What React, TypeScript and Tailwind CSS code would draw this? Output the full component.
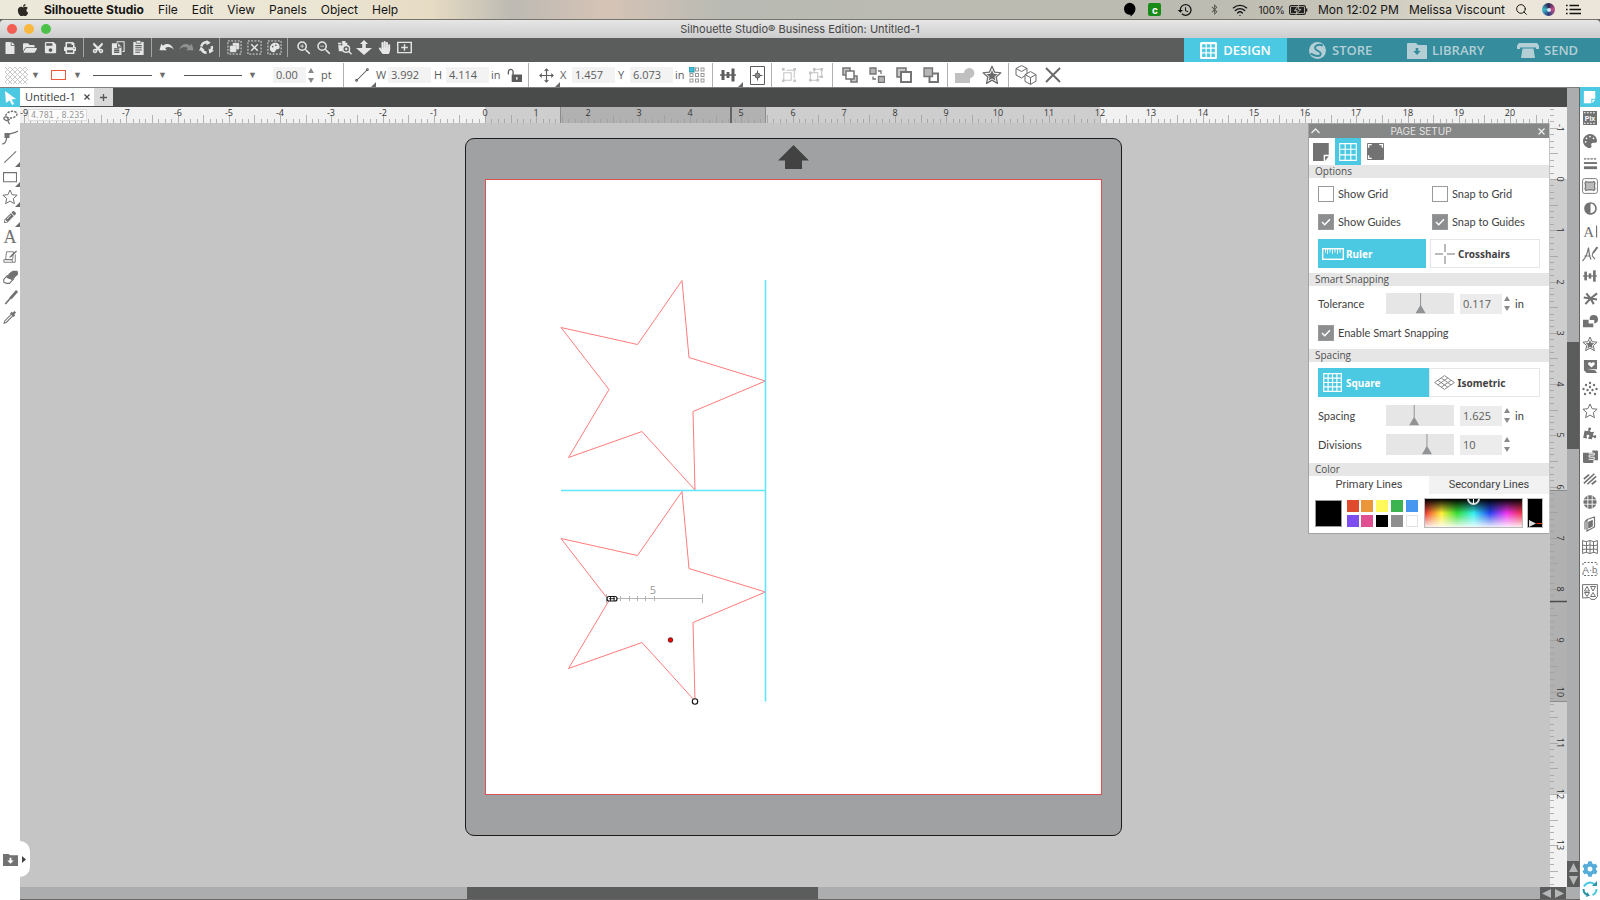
import React from "react";
import {
  FaApple, FaBluetoothB, FaFile, FaFolderOpen, FaPrint, FaCut, FaHandPaper, FaPalette, FaAdjust,
  FaPuzzlePiece, FaCog, FaPencilAlt,
} from "react-icons/fa";
import { MdZoomIn, MdZoomOut, MdHistory, MdSave } from "react-icons/md";
import { Wifi, Search } from "lucide-react";

type IconProps = { children: React.ReactNode; size?: number; w?: number; sw?: number };

/* Line icon drawn on a 16-unit grid. */
function Ic({ children, size = 16, w = 16, sw = 1.2 }: IconProps) {
  return (
    <svg width={(size * w) / 16} height={size} viewBox={`0 0 ${w} 16`} fill="none" stroke="currentColor" strokeWidth={sw} aria-hidden="true">
      {children}
    </svg>
  );
}

const STAR = "M8 1l2.1 4.7 5 .5-3.8 3.4 1.1 5.1L8 12.1l-4.4 2.6 1.1-5.1L.9 6.2l5-.5z";

function StarInStar() {
  return (
    <>
      <path d={STAR} strokeWidth="1" strokeLinejoin="round" />
      <path d="M8 4l1.3 2.9 3.1.3-2.4 2.1.7 3.1L8 10.8l-2.7 1.6.7-3.1-2.4-2.1 3.1-.3z" fill="currentColor" stroke="none" />
    </>
  );
}

function AlignBars() {
  return (
    <g fill="currentColor" stroke="none">
      <rect x="0" y="7.3" width="16" height="1.4" />
      <rect x="1.5" y="3" width="3" height="10" />
      <rect x="6.6" y="5" width="2.8" height="6" />
      <rect x="11.5" y="1.5" width="3" height="13" />
    </g>
  );
}

function FolderDown() {
  return (
    <>
      <path d="M0 2h6l1.5 1.5H16V15H0z" fill="currentColor" stroke="none" />
      <path d="M7 6h2v3h2.4L8 12.4 4.6 9H7z" className="fill-white" stroke="none" />
    </>
  );
}

function Btn({ label, className = "", children }: { label: string; className?: string; children: React.ReactNode }) {
  return (
    <button type="button" aria-label={label} className={`flex items-center justify-center ${className}`}>
      {children}
    </button>
  );
}

function MenuBar() {
  return (
    <header className="flex h-[19px] shrink-0 items-center bg-[linear-gradient(90deg,#ece8da_0%,#ebe5d3_20%,#e6dbc3_27%,#bdbab3_32%,#d6c3b6_38%,#b9bab3_45%,#bcbbb1_75%,#c9c6ba_85%,#ebe6d9_95%)] font-['Inter',sans-serif] text-[12px] leading-4 text-[#141414]">
      <nav className="flex items-center gap-[14px] pl-4">
        <a href="#apple" aria-label="Apple"><FaApple size={14} className="text-[#2d2a24]" /></a>
        <a href="#app" className="font-bold">Silhouette Studio</a>
        <a href="#file">File</a>
        <a href="#edit">Edit</a>
        <a href="#view">View</a>
        <a href="#panels">Panels</a>
        <a href="#object">Object</a>
        <a href="#help">Help</a>
      </nav>
      <div className="ml-auto flex items-center pr-[19px]">
        <svg width="13" height="15" viewBox="0 0 13 15" className="mr-3" aria-hidden="true"><path d="M6.500.800a6 6 0 0 1 6 6c0 3.500-2.500 6-5 7.700v-1.700a6 6 0 1 1-1-12z" fill="#000" /></svg>
        <span className="mr-4 flex size-[13px] items-center justify-center rounded-[2px] bg-[#178a17] text-[10px] font-bold text-white">c</span>
        <MdHistory size={16} className="mr-4" />
        <FaBluetoothB size={11} className="mr-3 text-[#55544d]" />
        <Wifi size={16} strokeWidth={2} className="mr-[10px]" />
        <span className="mr-1 text-[10px]">100%</span>
        <svg width="19" height="10" viewBox="0 0 19 10" className="mr-[10px]" aria-hidden="true">
          <rect x=".6" y=".6" width="15.8" height="8.8" rx="1.5" fill="none" stroke="#222" strokeWidth="1.1" />
          <rect x="2" y="2" width="13" height="6" fill="#222" />
          <path d="M9.5 .5L5.5 5.6h2.6L7 9.5l5-5.2H9.2z" fill="#222" stroke="#ddd9cc" strokeWidth=".8" />
          <path d="M17.6 3.4v3.2" stroke="#222" strokeWidth="1.4" />
        </svg>
        <span className="mr-[10px]">Mon 12:02 PM</span>
        <span className="mr-[10px]">Melissa Viscount</span>
        <Search size={13} strokeWidth={1.8} className="mr-[14px]" />
        <span className="mr-[11px] flex size-[13px] items-center justify-center rounded-full bg-[conic-gradient(#2b2450,#c24d8a,#2b3f7d,#3fb7c9,#2b2450)]">
          <span className="size-1 rounded-full bg-[#cfe6f5]" />
        </span>
        <svg width="15" height="11" viewBox="0 0 15 11" stroke="#111" strokeWidth="1.5" aria-hidden="true">
          <path d="M0 1.5h1.6M0 5.5h1.6M0 9.5h1.6M3.5 1.5H13M3.5 5.5H15M3.5 9.5H15" />
        </svg>
      </div>
    </header>
  );
}

function TitleBar() {
  return (
    <div className="relative flex h-[19px] shrink-0 items-center justify-center rounded-t-[4px] border-t border-[#77746c] bg-linear-to-b from-[#e6e6e6] to-[#cdcdcd]">
      <div className="absolute left-[7px] flex gap-[7px]">
        <button type="button" aria-label="Close window" className="size-[10px] rounded-full bg-[#f25e54]" />
        <button type="button" aria-label="Minimize window" className="size-[10px] rounded-full bg-[#f8b83e]" />
        <button type="button" aria-label="Zoom window" className="size-[10px] rounded-full bg-[#4cc149]" />
      </div>
      <h1 className="font-['Inter',sans-serif] text-[11px] leading-4 text-[#464646]">Silhouette Studio® Business Edition: Untitled-1</h1>
    </div>
  );
}

function ToolbarGroup({ children, last = false }: { children: React.ReactNode; last?: boolean }) {
  return <div className={`flex h-[19px] first:pl-0 ${last ? "pl-[6px]" : "border-r border-[#a4a5a5] pr-[3px] pl-1"}`}>{children}</div>;
}

const DASH = <rect x="1" y="1" width="14" height="14" strokeDasharray="2 1.5" />;

function MainToolbar() {
  return (
    <div className="flex h-6 shrink-0 bg-[#5b5d5c] text-[#e6e6e6]">
      <ToolbarGroup>
        <Btn label="New" className="w-5"><FaFile size={12} /></Btn>
        <Btn label="Open" className="w-5"><FaFolderOpen size={14} /></Btn>
        <Btn label="Save" className="w-5"><MdSave size={15} /></Btn>
        <Btn label="Print" className="w-5"><FaPrint size={12} /></Btn>
      </ToolbarGroup>
      <ToolbarGroup>
        <Btn label="Cut" className="w-5"><FaCut size={12} className="-rotate-90" /></Btn>
        <Btn label="Copy" className="w-5">
          <Ic size={14}><path d="M7 2V.8h8V12h-2" /><path d="M1 2.5h7l4 4V16H1z" fill="currentColor" stroke="none" /><path d="M7.5 3v4H12M3.5 9h6M3.5 11h6M3.5 13h6" stroke="#5b5d5c" /></Ic>
        </Btn>
        <Btn label="Paste" className="w-5">
          <Ic size={15}><path d="M2.5 2h11v14h-11z" fill="currentColor" stroke="none" /><path d="M5.5 .5h5v3h-5z" fill="currentColor" stroke="#5b5d5c" strokeWidth=".8" /><path d="M4.5 6h7M4.5 8.3h7M4.5 10.6h7M4.5 13h5" stroke="#5b5d5c" /></Ic>
        </Btn>
      </ToolbarGroup>
      <ToolbarGroup>
        <Btn label="Undo" className="w-5">
          <Ic size={15}><path d="M.5 11L2.4 4l1.8 2C8 2.600 14 4 15.800 10.500 13 7 9.500 7 6.500 8.600l1.800 2.400z" fill="currentColor" stroke="none" /></Ic>
        </Btn>
        <Btn label="Redo" className="w-5 text-[#8f9190]">
          <Ic size={15}><path d="M15.500 11L13.600 4l-1.800 2C8 2.600 2 4 .2 10.500 3 7 6.500 7 9.500 8.600L7.700 11z" fill="currentColor" stroke="none" /></Ic>
        </Btn>
        <Btn label="Sync" className="w-5">
          <Ic size={15} sw={2.6}><path d="M2.500 7a5.600 5.600 0 0 1 6-4.600M13.500 6.500a5.600 5.600 0 0 1-2 6M8 13.600a5.600 5.600 0 0 1-5-3" /><path d="M8 0l4.500 3L8 5.500zM16 11.500l-5 3-.8-5.200zM0 11.500l2-4.500 4 3.600z" fill="currentColor" stroke="none" /></Ic>
        </Btn>
      </ToolbarGroup>
      <ToolbarGroup>
        <Btn label="Select all" className="w-5"><Ic size={15} sw={1}>{DASH}<path d="M3.500 6.500h6v6h-6z" fill="currentColor" /><path d="M6.500 3.500h6v6h-2v-4h-4z" fill="currentColor" /></Ic></Btn>
        <Btn label="Deselect" className="w-5"><Ic size={15} sw={1}>{DASH}<path d="M4.500 4.500l7 7M11.500 4.500l-7 7" strokeWidth="1.600" /></Ic></Btn>
        <Btn label="Select by color" className="w-5"><Ic size={15} sw={1}>{DASH}<path d="M3 9c0-4 3-6 6-6 3 0 4.500 2 4.500 4.500S12 10 10 10c-1 0-.5 3-3 3S3 11 3 9z" fill="currentColor" stroke="none" /><circle cx="6" cy="7" r=".9" fill="#5b5d5c" stroke="none" /><circle cx="9.500" cy="5.600" r=".9" fill="#5b5d5c" stroke="none" /></Ic></Btn>
      </ToolbarGroup>
      <ToolbarGroup last>
        <Btn label="Zoom in" className="w-5"><MdZoomIn size={18} /></Btn>
        <Btn label="Zoom out" className="w-5"><MdZoomOut size={18} /></Btn>
        <Btn label="Zoom selection" className="w-5"><Ic size={15}><path d="M1 3h4V1h4v2h2v4H7v5H2z" fill="currentColor" stroke="none" /><path d="M5 1v5M1 5h5" stroke="#5b5d5c" strokeWidth=".8" /><circle cx="9.800" cy="9.500" r="3.600" fill="#5b5d5c" strokeWidth="1.500" /><path d="M8.500 9.500h2.600M9.800 8.200v2.600M12.500 12l3 3.200" strokeWidth="1.500" /></Ic></Btn>
        <Btn label="Drag zoom" className="w-5"><Ic size={16}><path d="M8 0l4 4H9.800v4H16l-8 7-8-7h6.200V4H4z" fill="currentColor" stroke="none" /></Ic></Btn>
        <Btn label="Pan" className="w-5"><FaHandPaper size={13} /></Btn>
        <Btn label="Fit to page" className="w-5"><Ic size={15}><path d="M.8 2.500h14.400v11H.8zM4.500 8h7M8 4.500v7" strokeWidth="1.500" /></Ic></Btn>
      </ToolbarGroup>
      <nav className="ml-auto flex font-['Open_Sans',sans-serif] text-[13px] leading-5 font-semibold">
        <a href="#design" className="flex h-full w-[103px] items-center justify-center gap-[6px] bg-[#4bc8e2] text-white">
          <Ic size={17}><rect width="16" height="16" rx="1.500" fill="currentColor" stroke="none" /><path d="M2 2h3.200v3.200H2zM6.400 2h3.200v3.200H6.400zM10.800 2H14v3.200h-3.200zM2 6.400h3.200v3.200H2zM6.400 6.400h3.200v3.200H6.400zM10.800 6.400H14v3.200h-3.200zM2 10.800h3.200V14H2zM6.400 10.800h3.200V14H6.400zM10.800 10.800H14V14h-3.200z" fill="#4bc8e2" stroke="none" /></Ic>
          DESIGN
        </a>
        <div className="flex w-[313px] bg-[#348c9d] pl-[22px] text-[#b3cfd5]">
          <a href="#store" className="flex w-[98px] items-center gap-[6px]">
            <Ic size={17}><circle cx="8" cy="8" r="8" fill="currentColor" stroke="none" /><path d="M13 3.500C9 1.500 4.500 3.500 6 6.500c1.200 2.300 5.500 2 5 5C10.500 14 6 13.500 1.500 11" stroke="#348c9d" strokeWidth="1.800" /></Ic>
            STORE
          </a>
          <a href="#library" className="flex w-[110px] items-center gap-[5px]">
            <svg width="20" height="17" viewBox="0 0 20 17" aria-hidden="true"><path d="M1 1h8l2 2h8a1 1 0 0 1 1 1v13H0V2a1 1 0 0 1 1-1z" fill="#b3cfd5" /><path d="M8.700 6h2.600v3h2.400L10 13 6.300 9h2.400z" fill="#348c9d" /></svg>
            LIBRARY
          </a>
          <a href="#send" className="flex items-center gap-[5px]">
            <svg width="22" height="15" viewBox="0 0 22 15" aria-hidden="true"><path d="M2 0h18l2 2.500V6h-3V4.500H3V6H0V2.500z" fill="#b3cfd5" /><path d="M5.500 5.500h11L18 15H4z" fill="#b3cfd5" /></svg>
            SEND
          </a>
        </div>
      </nav>
    </div>
  );
}

function Caret() {
  return <span className="text-[9px] leading-3 text-[#6d6d6d]">▼</span>;
}

function Spinner({ label }: { label: string }) {
  return (
    <span className="flex w-[10px] flex-col items-center gap-[5px]">
      <button type="button" aria-label={`Increase ${label}`}><svg width="6" height="5" viewBox="0 0 6 5"><path d="M3 0l3 5H0z" fill="#8a8a8a" /></svg></button>
      <button type="button" aria-label={`Decrease ${label}`}><svg width="6" height="5" viewBox="0 0 6 5"><path d="M3 5l3-5H0z" fill="#8a8a8a" /></svg></button>
    </span>
  );
}

function NumField({ id, label, value }: { id: string; label: string; value: string }) {
  return (
    <div className="flex items-center">
      <label htmlFor={id} className="w-3">{label}</label>
      <input id={id} defaultValue={value} className="h-4 w-[43px] bg-[#f3f3f3] px-[3px] text-[11px] text-[#5c5c5c]" />
    </div>
  );
}

function Sep() {
  return <div className="h-full w-px shrink-0 bg-[#b0b0b0]" />;
}

function Corner() {
  return <svg width="5" height="5" viewBox="0 0 5 5" className="absolute right-0 bottom-0" aria-hidden="true"><path d="M5 0v5H0z" fill="#6b6b6b" /></svg>;
}

function OptionsBar() {
  return (
    <div className="flex h-[26px] shrink-0 items-center border-b border-[#7d7d7d] bg-white pt-px font-['Open_Sans','Noto_Sans',sans-serif] text-[11px] leading-4 text-[#5c5c5c]">
      <button type="button" aria-label="Fill color" className="flex w-[46px] items-center gap-[3px] pl-[5px]">
        <svg width="23" height="17" aria-hidden="true">
          <defs>
            <pattern id="hatch" width="5" height="5" patternUnits="userSpaceOnUse"><path d="M0 0l5 5M5 0L0 5" stroke="#bdbdbd" strokeWidth=".8" /></pattern>
          </defs>
          <rect width="23" height="17" fill="url(#hatch)" />
        </svg>
        <Caret />
      </button>
      <button type="button" aria-label="Line color" className="flex w-[47px] items-center gap-[7px] pl-[5px]">
        <span className="h-[10px] w-[15px] border border-[#ef5a3c]" />
        <Caret />
      </button>
      <button type="button" aria-label="Line style" className="flex w-[91px] items-center gap-[6px]">
        <span className="h-px w-[59px] bg-[#555]" />
        <Caret />
      </button>
      <button type="button" aria-label="Line ends" className="flex w-[89px] items-center gap-[6px]">
        <span className="h-px w-[58px] bg-[#555]" />
        <Caret />
      </button>
      <input aria-label="Line thickness" defaultValue="0.00" className="h-4 w-[33px] bg-[#f3f3f3] px-[3px] text-[11px]" />
      <Spinner label="line thickness" />
      <span className="ml-[5px] w-[22px]">pt</span>
      <Sep />
      <div className="relative flex h-full w-[32px] items-center justify-center pl-1"><Ic size={14}><path d="M2 14L14 2" /><circle cx="1.800" cy="14.200" r="1" /><circle cx="14.200" cy="1.800" r="1" /></Ic><Corner /></div>
      <div className="flex gap-[3px]">
        <NumField id="w" label="W" value="3.992" />
        <NumField id="h" label="H" value="4.114" />
      </div>
      <span className="w-4 pl-[2px]">in</span>
      <Btn label="Lock aspect ratio" className="w-[18px]"><Ic size={15}><path d="M1.500 7V4a2.500 2.500 0 0 1 5 0v3.500" strokeWidth="1.400" /><path d="M5 7h11v8H5zM9.800 9.500v3h1.400v-3z" fill="currentColor" fillRule="evenodd" stroke="none" /></Ic></Btn>
      <div className="w-[5px]" />
      <Sep />
      <div className="relative flex h-full w-[31px] items-center justify-center pl-1"><Ic size={15}><path d="M1 8h14M8 1v14M3 6L1 8l2 2M13 6l2 2-2 2M6 3l2-2 2 2M6 13l2 2 2-2" /></Ic><Corner /></div>
      <div className="flex gap-[3px]">
        <NumField id="x" label="X" value="1.457" />
        <NumField id="y" label="Y" value="6.073" />
      </div>
      <span className="w-[14px] pl-[2px]">in</span>
      <Btn label="Anchor point" className="w-[20px]">
        <Ic size={16} sw={1}>
          {[1, 6.500, 12].map((y) => [1, 6.500, 12].map((x) => <rect key={`${x}-${y}`} x={x} y={y} width="3" height="3" stroke="#9a9a9a" />))}
          <rect x="0" y="0" width="5" height="5" fill="#3fc0da" stroke="#2a93a8" />
        </Ic>
      </Btn>
      <div className="w-[5px]" />
      <Sep />
      <div className="relative flex h-full w-[30px] items-center justify-center"><Ic size={16}><AlignBars /></Ic><Corner /></div>
      <Btn label="Center to page" className="w-[28px]"><svg width="15" height="19" viewBox="0 0 15 19" fill="none" stroke="currentColor" aria-hidden="true"><path d="M.5.500h14v18H.5zM2.500 9.500h10M7.500 4.500v10" /><circle cx="7.500" cy="9.500" r="2.500" fill="#8a8a8a" /></svg></Btn>
      <Sep />
      <div className="flex w-[60px] justify-center text-[#c4c4c4]">
        <Btn label="Group" className="w-[27px]"><Ic size={14}><path d="M2 5.500h8.500V14H2zM5 2.500h9v9" /><path d="M0 0h3v3H0zM13 0h3v3h-3zM0 13h3v3H0zM13 13h3v3h-3z" fill="currentColor" stroke="none" /></Ic></Btn>
        <Btn label="Ungroup" className="w-[27px]"><Ic size={14}><path d="M1.500 5.500H10V14H1.500zM6 5.500v-4h8.500V10H10" /><path d="M4.500 0h3v3h-3zM13 0h3v3h-3zM0 4h3v3H0zM0 12.500h3v3H0zM8.500 12.500h3v3h-3zM13 8.500h3v3h-3z" fill="currentColor" stroke="none" /></Ic></Btn>
      </div>
      <Sep />
      <div className="flex w-[114px] justify-center text-[#747474]">
        <Btn label="Bring to front" className="w-[27px]"><Ic size={16} sw={1.500}><path d="M1 1h7v7H1zM9 9h6v6H9z" fill="#c9c9c9" /><path d="M4 4h8v8H4z" className="fill-white" /></Ic></Btn>
        <Btn label="Bring forward" className="w-[27px]"><Ic size={16} sw={1.300}><path d="M1 1h6v6H1zM9.500 9.500h6v6h-6z" fill="#b5b5b5" /><path d="M9 4h3v3M4 9.500V12h3" /></Ic></Btn>
        <Btn label="Send backward" className="w-[27px]"><Ic size={16} sw={1.500}><path d="M1 1h9v9H1z" fill="#c9c9c9" /><path d="M5 5h10v10H5z" className="fill-white" strokeWidth="2" /></Ic></Btn>
        <Btn label="Send to back" className="w-[27px]"><Ic size={16} sw={2}><path d="M6.500 6.500H15V15H6.500z" /><path d="M1 1h8.500v8.500H1z" fill="#b5b5b5" strokeWidth="1.300" /></Ic></Btn>
      </div>
      <Sep />
      <div className="flex w-[60px] justify-center text-[#6a6a6a]">
        <Btn label="Weld" className="w-[27px] text-[#c0c0c0]"><svg width="20" height="16" viewBox="0 0 20 16" aria-hidden="true"><path d="M0 6h9a5.200 5.200 0 1 1 6 5.300V16H0z" fill="currentColor" /></svg></Btn>
        <Btn label="Offset" className="w-[27px]"><Ic size={20}><StarInStar /></Ic></Btn>
      </div>
      <Sep />
      <div className="flex w-[60px] items-center justify-center text-[#6a6a6a]">
        <Btn label="3D view" className="w-[27px]"><svg width="22" height="20" viewBox="0 0 22 20" fill="none" stroke="currentColor" aria-hidden="true"><path d="M6.500.600l5.500 2.700v6L6.500 13 1 10V3.500zM1 3.500l5.500 3L12 3.300" /><path d="M15.500 6.600l5.500 3v6.500l-5.500 3.300-5.500-3V9.600zM10 9.600l5.500 3 5.500-3M15.500 12.600v6.800" className="fill-white" /></svg></Btn>
        <Btn label="Delete" className="w-[27px]"><Ic size={16} sw={1.900}><path d="M1 1l14 14M15 1L1 15" /></Ic></Btn>
      </div>
    </div>
  );
}

function LeftTools() {
  const tools: { label: string; corner?: boolean; icon: React.ReactNode }[] = [
    { label: "Lasso", icon: <Ic size={15}><ellipse cx="9" cy="5" rx="6" ry="3.500" strokeDasharray="2.500 1.200" transform="rotate(-12 9 5)" strokeWidth="1.600" /><path d="M4 7.500C1 7 0 9 2 10.500s5 .5 5-1M5 8c1 3-1 3 2 7" strokeWidth="1.400" /></Ic> },
    { label: "Edit points", icon: <Ic size={16}><path d="M0 15c5 0 4-5 5-8s6-2 11-5" /><path d="M2.500 4h5v5h-5z" fill="currentColor" stroke="none" /></Ic> },
    { label: "Line", corner: true, icon: <Ic size={14}><path d="M1.500 14.500L15 1.500" /></Ic> },
    { label: "Rectangle", corner: true, icon: <Ic size={14}><path d="M.6 3h14.800v10.500H.6z" /></Ic> },
    { label: "Polygon", corner: true, icon: <Ic size={16} sw={1}><path d={STAR} /></Ic> },
    { label: "Freehand", corner: true, icon: <FaPencilAlt size={12} /> },
    { label: "Text", icon: <span className="font-['Liberation_Serif',serif] text-[18px] leading-5">A</span> },
    { label: "Sketch", icon: <Ic size={14} sw={1}><path d="M4 2h8l-1 9H3zM1 11h9l1 3h3V5M1 11v3h10" /><path d="M15 .5L8 7l-.8 2.200L9.500 8 16 1.800z" fill="currentColor" stroke="none" /></Ic> },
    { label: "Eraser", icon: <Ic size={15}><path d="M7 4l3.500-2.500H15l.5 3L9.500 10 4.500 8z" fill="currentColor" /><path d="M5 5.500L.8 10v3l3 1.200h3L12 9" /></Ic> },
    { label: "Knife", icon: <Ic size={15}><path d="M15 1L8 9" strokeWidth="3" /><path d="M8.500 8L2.500 15" strokeWidth="1.800" /></Ic> },
    { label: "Eyedropper", icon: <Ic size={14}><path d="M10 4.500L2 12.500 1.200 15l2.500-.8 8-8" /><path d="M9 3l4 4M10.500 5.500L14 2" strokeWidth="2.800" /></Ic> },
  ];
  return (
    <aside className="flex w-5 shrink-0 flex-col bg-white text-[#727272]">
      <Btn label="Select" className="h-[19px] w-5 bg-[#4bc8e2] text-white">
        <svg width="11" height="14" viewBox="0 0 11 14" fill="currentColor" aria-hidden="true"><path d="M0 0l11 8-4.500.4 2.600 4.600-2 1-2.500-4.700L1 12z" /></svg>
      </Btn>
      {tools.map((t) => (
        <div key={t.label} className="relative h-5">
          <Btn label={t.label} className="size-5">{t.icon}</Btn>
          {t.corner && <Corner />}
        </div>
      ))}
      <div className="relative mt-auto mb-[23px] h-9">
        <div className="absolute top-0 left-5 z-10 flex h-9 w-[10px] items-center rounded-r-full bg-white pl-[2px]">
          <svg width="4" height="7" viewBox="0 0 4 7" aria-hidden="true"><path d="M0 0l4 3.500L0 7z" fill="#444" /></svg>
        </div>
        <Btn label="Show library" className="h-9 w-5"><Ic size={15}><FolderDown /></Ic></Btn>
      </div>
    </aside>
  );
}

const INCH = 51.25;

function HorizontalRuler() {
  const origin = 465;
  const ticks: string[] = [];
  for (let i = -9 * 8; i <= 21 * 8; i++) {
    const x = Math.round(origin + (i * INCH) / 8) + 0.5;
    ticks.push(`M${x} 16v-${i % 4 === 0 ? 8 : 4}`);
  }
  const labels = Array.from({ length: 30 }, (_, i) => i - 9).filter((n) => n !== -8);
  return (
    <svg className="block h-4 w-full bg-[#f1f1f1] font-['Open_Sans',sans-serif]" aria-label="Horizontal ruler">
      <rect x={origin} width={12 * INCH} height="16" fill="#cecece" />
      <rect x="540" width="205" height="16" fill="#b1b1b1" />
      <path d={ticks.join("")} stroke="#9d9d9d" strokeWidth="1" opacity=".75" />
      <path d="M540.500 0v16M745.500 0v16" stroke="#8c8c8c" />
      <path d="M711 0v16" stroke="#4c4c4c" strokeWidth="1.500" />
      {labels.map((n) => (
        <text key={n} x={Math.round(origin + n * INCH)} y="9" fontSize="9" textAnchor="middle" fill="#333">{n}</text>
      ))}
    </svg>
  );
}

function VerticalRuler() {
  const origin = 72;
  const ticks: string[] = [];
  for (let i = -11; i <= 110; i++) {
    const y = Math.round(origin + (i * INCH) / 8) + 0.5;
    ticks.push(`M0 ${y}h${i % 4 === 0 ? 8 : 4}`);
  }
  const labels = Array.from({ length: 15 }, (_, i) => i - 1);
  return (
    <svg className="block h-full w-[17px] shrink-0 bg-[#f1f1f1] font-['Open_Sans',sans-serif]" aria-label="Vertical ruler">
      <rect y={origin} width="17" height={12 * INCH} fill="#cecece" />
      <rect y="383" width="17" height="212" fill="#b1b1b1" />
      <path d={ticks.join("")} stroke="#9d9d9d" opacity=".75" />
      <path d="M0 383.500h17M0 594.500h17" stroke="#8c8c8c" />
      <path d="M0 494.500h17" stroke="#4c4c4c" strokeWidth="1.500" />
      {labels.map((n) => {
        const y = Math.round(origin + n * INCH);
        return <text key={n} x="7" y={y} fontSize="9" textAnchor="middle" fill="#333" transform={`rotate(90 7 ${y})`}>{n}</text>;
      })}
    </svg>
  );
}

const STAR_POINTS = "196,100.5 203,177.500 279.500,201 207,231.500 209,310 156,251.500 82.500,277.500 123,209.500 75,147.500 151.500,164.500";

function Mat() {
  return (
    <div className="absolute top-[15px] left-[445px] h-[698px] w-[657px] rounded-[9px] border border-[#1c1c1c] bg-[#9fa1a3]">
      <svg width="31" height="24" viewBox="0 0 31 24" className="absolute top-[6px] left-[312px]" aria-hidden="true"><path d="M15.500 0L31 15.500h-7V24H7v-8.500H0z" fill="#424242" /></svg>
      <div className="absolute top-[40px] left-[19px] h-[616px] w-[617px] border border-[#dc5054] bg-white">
        <svg width="615" height="614" fill="none" className="block" aria-label="Two stars with guides">
          <polygon points={STAR_POINTS} stroke="#ff7b7b" />
          <polygon points={STAR_POINTS} stroke="#ff7b7b" transform="translate(0 211)" />
          <path d="M279.500 100v421.500" stroke="#5fe6fb" strokeWidth="1.600" />
          <path d="M75 310.500h205" stroke="#5fe6fb" strokeWidth="1.600" />
          <g transform="translate(-1 1)">
            <path d="M122 417.500h95.500M121.500 413v9M217.500 413v9M135.500 415v5M144.500 415v5M152.500 415v5M160.500 415v5M169.500 415v5" stroke="#b5b5b5" />
            <text x="168" y="413" fontSize="11" textAnchor="middle" fill="#999" className="font-['Open_Sans',sans-serif]">5</text>
            <rect x="122" y="415.500" width="10" height="4.500" rx="2" fill="#fff" stroke="#111" strokeWidth="1.200" />
            <path d="M124 417.700h6M125.500 416v4M129 416v4" stroke="#111" strokeWidth=".9" />
          </g>
          <circle cx="184.500" cy="460" r="2.300" fill="#f00" stroke="#401010" strokeWidth=".8" />
          <circle cx="209" cy="521.500" r="2.700" fill="#fff" stroke="#111" strokeWidth="1.100" />
        </svg>
      </div>
    </div>
  );
}

function SectionTitle({ children }: { children: React.ReactNode }) {
  return <h3 className="h-[13px] bg-[#e6e6e6] pl-[6px] font-['Open_Sans',sans-serif] text-[10px] leading-[13px] text-[#4f4f4f]">{children}</h3>;
}

function Check({ id, label, checked = false }: { id: string; label: string; checked?: boolean }) {
  return (
    <div className="flex items-center gap-1">
      <span className="relative flex size-4">
        <input id={id} type="checkbox" defaultChecked={checked} className="peer size-4 appearance-none border border-[#9a9a9a] bg-white checked:bg-[#8c8e90]" />
        <svg width="10" height="8" viewBox="0 0 10 8" fill="none" className="pointer-events-none absolute top-1 left-[3px] hidden peer-checked:block" aria-hidden="true"><path d="M1 4l2.700 2.700L9 1.200" stroke="#fff" strokeWidth="1.500" /></svg>
      </span>
      <label htmlFor={id}>{label}</label>
    </div>
  );
}

function SliderRow({ id, label, pos, value, unit }: { id: string; label: string; pos: number; value: string; unit?: string }) {
  return (
    <div className="flex h-[21px] items-center pl-[9px]">
      <label htmlFor={id} className="w-[68px]">{label}</label>
      <input
        aria-label={`${label} slider`}
        type="range"
        defaultValue={pos}
        className="h-[21px] w-[68px] appearance-none bg-[#e6e6e6] [&::-webkit-slider-thumb]:h-[21px] [&::-webkit-slider-thumb]:w-[10px] [&::-webkit-slider-thumb]:appearance-none [&::-webkit-slider-thumb]:bg-[#919395] [&::-webkit-slider-thumb]:[clip-path:polygon(45%_0,55%_0,55%_60%,100%_97%,0_97%,45%_60%)]"
      />
      <input id={id} defaultValue={value} className="ml-[6px] h-5 w-[42px] bg-[#ececec] pl-[3px] font-['Open_Sans',sans-serif] text-[11px] text-[#5c5c5c]" />
      <Spinner label={label} />
      {unit && <span className="pl-[3px]">{unit}</span>}
    </div>
  );
}

function PageSetup() {
  return (
    <section className="absolute top-0 right-px w-[241px] border border-[#a3a3a3] border-r-0 bg-white pb-[5px] font-['Lato',sans-serif] text-[11px] leading-4 text-[#424242]">
      <div className="flex h-[14px] items-center bg-[#868787] pr-1 pl-[2px] text-white">
        <Btn label="Collapse panel"><svg width="9" height="6" viewBox="0 0 9 6" fill="none" stroke="#eee" strokeWidth="1.300"><path d="M.5 5l4-4 4 4" /></svg></Btn>
        <h2 className="flex-1 pr-4 text-center font-['Inter',sans-serif] text-[10px] leading-[13px] text-[#e4e4e4]">PAGE SETUP</h2>
        <Btn label="Close panel"><svg width="7" height="7" viewBox="0 0 7 7" stroke="#eee" strokeWidth="1.200"><path d="M.5.500l6 6M6.500.500l-6 6" /></svg></Btn>
      </div>
      <div className="flex h-[27px] items-center text-[#727272]">
        <Btn label="Page" className="w-[26px]"><Ic size={18}><path d="M0 0h14v10.500H9.500V16H0z" fill="currentColor" stroke="none" /><path d="M10.700 16v-4.200H14z" fill="currentColor" stroke="none" /></Ic></Btn>
        <Btn label="Grid" className="h-full w-[26px] bg-[#4bc8e2] text-white"><Ic size={18} sw={1}><path d="M.6.600h14.800v14.800H.6zM5.500.600v14.800M10.500.600v14.800M.6 5.500h14.800M.6 10.500h14.800" /></Ic></Btn>
        <Btn label="Registration marks" className="w-[28px]"><Ic size={17}><rect width="16" height="16" rx="1" fill="currentColor" stroke="none" /><path d="M1.500 4.500v-3h3M11.500 1.500h3v3M1.500 11.500v3h3" stroke="#fff" strokeWidth="1.300" /></Ic></Btn>
      </div>
      <SectionTitle>Options</SectionTitle>
      <div className="grid grid-cols-[114px_1fr] gap-y-3 px-[9px] pt-2 pb-[9px]">
        <Check id="show-grid" label="Show Grid" />
        <Check id="snap-grid" label="Snap to Grid" />
        <Check id="show-guides" label="Show Guides" checked />
        <Check id="snap-guides" label="Snap to Guides" checked />
      </div>
      <div className="flex gap-1 px-[9px] pb-[5px] font-['Noto_Sans',sans-serif] text-[10px] font-bold">
        <button type="button" className="flex h-[29px] flex-1 items-center gap-[2px] bg-[#4bc8e2] pl-1 text-white">
          <svg width="22" height="12" viewBox="0 0 22 12" fill="none" stroke="#fff" aria-hidden="true"><rect x=".7" y=".7" width="20.600" height="10.600" strokeWidth="1.400" /><path d="M3.500 1v3.500M5.500 1v5M8 1v3.500M10.500 1v5M13 1v3.500M15.500 1v5M18 1v3.500" strokeWidth=".9" /></svg>
          Ruler
        </button>
        <button type="button" className="flex h-[29px] flex-1 items-center gap-[3px] border border-[#e6e6e6] pl-1">
          <svg width="20" height="20" viewBox="0 0 20 20" stroke="#777" aria-hidden="true"><path d="M0 10h8M12 10h8M10 0v8M10 12v8" /></svg>
          Crosshairs
        </button>
      </div>
      <SectionTitle>Smart Snapping</SectionTitle>
      <div className="flex flex-col gap-[11px] pt-[7px] pb-2">
        <SliderRow id="tolerance" label="Tolerance" pos={51} value="0.117" unit="in" />
        <div className="pl-[9px]"><Check id="smart" label="Enable Smart Snapping" checked /></div>
      </div>
      <SectionTitle>Spacing</SectionTitle>
      <div className="flex px-[9px] pt-[6px] font-['Noto_Sans',sans-serif] text-[10px] font-bold">
        <button type="button" className="flex h-[29px] flex-1 items-center gap-1 bg-[#4bc8e2] pl-[5px] text-white">
          <Ic size={19} sw={1}><path d="M.6.600h14.800v14.800H.6zM4.300.600v14.800M8 .6v14.800M11.700.600v14.800M.6 4.300h14.800M.6 8h14.800M.6 11.700h14.800" /></Ic>
          Square
        </button>
        <button type="button" className="flex h-[29px] flex-1 items-center gap-[3px] border border-[#e6e6e6] pl-1">
          <svg width="21" height="15" viewBox="0 0 21 15" fill="none" stroke="#8a8a8a" aria-hidden="true"><path d="M10.500.600L20.400 7.500l-9.900 6.900L.6 7.500zM7.200 3l9.900 6.900M3.900 5.300l9.900 6.900M13.800 3L3.900 9.800M17.100 5.300l-9.900 6.900" /></svg>
          Isometric
        </button>
      </div>
      <div className="flex flex-col gap-2 pt-2 pb-2">
        <SliderRow id="spacing" label="Spacing" pos={40} value="1.625" unit="in" />
        <SliderRow id="divisions" label="Divisions" pos={62} value="10" />
      </div>
      <SectionTitle>Color</SectionTitle>
      <div className="flex h-[18px] font-['Roboto',sans-serif] text-[11px]">
        <button type="button" className="flex-1">Primary Lines</button>
        <button type="button" className="flex-1 bg-[#f2f2f2]">Secondary Lines</button>
      </div>
      <div className="flex items-center px-[6px] pt-1">
        <button type="button" aria-label="Current color" className="h-[27px] w-[27px] border border-[#999] bg-black" />
        <div className="ml-[5px] grid grid-cols-5 gap-[3px]">
          <button type="button" aria-label="Red" className="size-3 bg-[#e04b2e]" />
          <button type="button" aria-label="Orange" className="size-3 bg-[#ec963c]" />
          <button type="button" aria-label="Yellow" className="size-3 bg-[#fff95c]" />
          <button type="button" aria-label="Green" className="size-3 bg-[#3cb44f]" />
          <button type="button" aria-label="Blue" className="size-3 bg-[#4796f0]" />
          <button type="button" aria-label="Purple" className="size-3 bg-[#7e4df0]" />
          <button type="button" aria-label="Pink" className="size-3 bg-[#df4f92]" />
          <button type="button" aria-label="Black" className="size-3 bg-black" />
          <button type="button" aria-label="Gray" className="size-3 bg-[#8f8f8f]" />
          <button type="button" aria-label="White" className="size-3 border border-[#e2e2e2] bg-white" />
        </div>
        <div className="relative ml-[6px] h-[30px] w-[101px] overflow-hidden border border-[#bbb] bg-[linear-gradient(180deg,#000_0%,transparent_50%,#ffffffe6_100%),linear-gradient(90deg,#e33_0%,#fe3_17%,#3d3_33%,#3ee_50%,#24e_67%,#e3e_84%,#e34_100%)]">
          <span className="absolute -top-[7px] left-[42px] size-[13px] rounded-full border-2 border-[#ddd]" />
          <span className="absolute top-0 left-12 h-[5px] w-px bg-white" />
        </div>
        <div className="relative ml-1 h-[30px] w-[16px] border border-[#bbb] bg-black">
          <svg width="14" height="7" viewBox="0 0 14 7" className="absolute bottom-0 left-0" aria-hidden="true"><path d="M1 0l7 3.500L1 7z" fill="#ddd" /><path d="M8.500 3.500H14" stroke="#e53b1e" /></svg>
        </div>
      </div>
    </section>
  );
}

function RightTools() {
  const dots = [[8, 2], [4, 4], [12, 4], [8, 6], [1.5, 8], [5.500, 9], [10.500, 9], [14.500, 8], [3, 13], [8, 12], [13, 13]];
  const panels: [string, React.ReactNode][] = [
    ["Pixscan", <Ic size={14}><path d="M0 0h16v16H0z" fill="currentColor" stroke="none" /><path d="M1 2h14M1 14h14" stroke="#fff" strokeDasharray="2 1.500" /><text x="8" y="11" fontSize="8" fontWeight="bold" textAnchor="middle" fill="#fff" stroke="none" className="font-['Liberation_Sans',sans-serif]">Pix</text></Ic>],
    ["Fill", <FaPalette size={14} />],
    ["Line style", <Ic size={15}><path d="M1 3h14" strokeDasharray="2.500 1" /><path d="M1 7.500h14" strokeWidth="2" /><path d="M1 12.500h14" strokeWidth="3" /></Ic>],
    ["Trace", <Ic size={16}><rect x=".6" y=".6" width="14.800" height="14.800" rx="2" strokeWidth=".9" /><path d="M4 3.500l2 .7h4l2-.7 1 1.500-.5 2v2l.5 2-1 1.500-2-.7H6l-2 .7L3 11l.5-2V7L3 5z" fill="#bbb" /></Ic>],
    ["Image effects", <FaAdjust size={13} />],
    ["Text style", <Ic size={15}><text x="6" y="14" fontSize="16" textAnchor="middle" fill="currentColor" stroke="none" className="font-['Liberation_Serif',serif]">A</text><path d="M14.500 1.500v13" /></Ic>],
    ["Glyphs", <Ic size={16}><path d="M.5 15C4 12 5.500 7 6.500 1.500c.5 4 .5 8 2.500 12M2.500 10h6" /><path d="M15.500 1L11 7" strokeWidth="2" /><path d="M11 7c-2 3 0 4 2 6" /></Ic>],
    ["Transform", <Ic size={14}><AlignBars /></Ic>],
    ["Replicate", <Ic size={15}><path d="M8 8L3.500 2.500M8 8l7-5.500M8 8L.8 7M8 8l7 1M8 8l-5.500 6M8 8l3.500 6" strokeWidth="2.200" /></Ic>],
    ["Modify", <Ic size={15}><path d="M0 6h6v4h5v4H0z" fill="currentColor" stroke="none" /><path d="M7 5.500A4.500 4.500 0 1 1 12 10V6.500H7.500z" fill="currentColor" stroke="none" /></Ic>],
    ["Offset", <Ic size={16}><StarInStar /></Ic>],
    ["Sketch", <Ic size={15}><path d="M1 1h14v10H4l9 1 2 3H4L1 12z" fill="currentColor" stroke="none" /><path d="M9 9L5.500 5.800C5 3 8 3 9 4.600 10 3 13 3 12.500 5.800z" className="fill-white" stroke="none" /></Ic>],
    ["Stipple", <Ic size={16}>{dots.map(([x, y]) => <circle key={`${x}-${y}`} cx={x} cy={y} r="1.200" fill="currentColor" stroke="none" />)}</Ic>],
    ["Rhinestone", <Ic size={16} sw={1}><path d={STAR} /></Ic>],
    ["Puzzle", <FaPuzzlePiece size={13} className="rotate-12" />],
    ["Nesting", <Ic size={15}><path d="M0 4h10V1.500h5l1 1V12h-5v3H1l-1-1z" fill="currentColor" stroke="none" /><path d="M6 4.500h6v2H6.500v2.200H12v2.300H6" stroke="#fff" strokeWidth="1" /></Ic>],
    ["Shade", <Ic size={14} sw={1.900}><path d="M1 8l6-5M1 13L13 2M5 14L15 5M10 14l5-4" /></Ic>],
    ["Warp", <Ic size={14}><path d="M4 1.500q4-2.500 8 0l2.500 2.500q2 4 0 8L12 14.500q-4 2.500-8 0L1.500 12q-2-4 0-8z" fill="currentColor" stroke="none" /><path d="M5.500 1v14M10.500 1v14M0 5.500h16M0 10.500h16" stroke="#fff" strokeWidth="1" /></Ic>],
    ["Perspective", <Ic size={16}><path d="M5 3.500L12.500 1v10L5 15zM3 5.500v8M3 5.500L5 4M10 5v5l-3 1.600V6.300z" /><path d="M10 5v5l-3 1.600V6.300z" fill="currentColor" /></Ic>],
    ["Media layout", <Ic size={16} sw={1}><path d="M.6 1.500q3.400 2.500 7.400 0 4 2.500 7.400 0v13q-3.400-2.500-7.400 0-4-2.500-7.400 0zM4.500 3v10.500M8 1.500v13M11.500 3v10.500M.6 6q3.400 1.500 7.400 0 4 1.500 7.400 0M.6 10.500q3.400-1 7.400 0 4-1 7.400 0" /></Ic>],
    ["Text on path", <Ic size={16}><path d="M1 4V1.500h14V4M1 12v2.500h14V12" strokeDasharray="2 1.500" strokeWidth="1" /><text x="8" y="11.500" fontSize="9.500" textAnchor="middle" fill="currentColor" stroke="none" className="font-['Liberation_Sans',sans-serif]">A·b</text></Ic>],
    ["Conical warp", <Ic size={16} sw={1}><path d="M.6.600h14.800v12L13 15.400H9L7.500 13.500.6 14zM2.500 7L5 2.500 7.500 7zM8.500 2.500h5L11 7zM2.500 8.500h5L5 12.500zM8.500 12.500L11 8.500l2.500 4z" /></Ic>],
  ];
  return (
    <aside className="flex w-5 shrink-0 flex-col bg-white text-[#727272]">
      <div className="-mt-px flex h-[516px] flex-col">
        <Btn label="Page setup" className="h-5 w-5 bg-[#4bc8e2] text-white"><Ic size={14}><path d="M1 1h13v9h-4.500v5H1zM10.700 15v-3.800H14z" fill="currentColor" stroke="none" /></Ic></Btn>
        {panels.map(([label, icon]) => <Btn key={label} label={label} className="w-5 flex-1">{icon}</Btn>)}
      </div>
      <div className="mt-auto flex flex-col items-center gap-1 pb-[3px]">
        <Btn label="Preferences" className="text-[#55acd8]"><FaCog size={16} /></Btn>
        <Btn label="Sync" className="text-[#2b93a6]"><Ic size={16} sw={2}><path d="M2 5.500A6.500 6.500 0 0 1 13 4M14.500 8a6.500 6.500 0 0 1-4 6" stroke="#4bc8e2" /><path d="M1.500 8a6.500 6.500 0 0 0 5 6.300" /><path d="M10 5h5V0zM4 16l4-1.500L5 11z" fill="currentColor" stroke="none" /></Ic></Btn>
      </div>
    </aside>
  );
}

function Tri({ d }: { d: string }) {
  return <svg width="9" height="9" viewBox="0 0 9 9" aria-hidden="true"><path d={d} fill="#b4b6b8" /></svg>;
}

export default function App() {
  return (
    <div className="flex h-screen w-full flex-col overflow-hidden bg-[#5b5d5c]">
      <MenuBar />
      <TitleBar />
      <MainToolbar />
      <OptionsBar />
      <div className="flex min-h-0 flex-1">
        <LeftTools />
        <main className="flex min-w-0 flex-1 flex-col">
          <div className="flex min-h-0 flex-1">
            <div className="flex min-w-0 flex-1 flex-col">
              <div className="flex h-[19px] shrink-0 bg-[#494b4a] pb-px font-['Open_Sans','Noto_Sans',sans-serif] text-[11px] leading-4 text-[#3a3a3a]">
                <div className="flex w-[74px] items-center justify-between bg-white pr-1 pl-[5px]">
                  <span>Untitled-1</span>
                  <Btn label="Close tab"><svg width="6" height="6" viewBox="0 0 6 6" stroke="#444" strokeWidth="1.100"><path d="M.5.500l5 5M5.500.500l-5 5" /></svg></Btn>
                </div>
                <Btn label="New tab" className="w-[19px] bg-[#dadada]"><svg width="7" height="7" viewBox="0 0 7 7" stroke="#555" strokeWidth="1.300"><path d="M0 3.500h7M3.500 0v7" /></svg></Btn>
              </div>
              <div className="flex min-h-0 flex-1">
                <div className="flex min-w-0 flex-1 flex-col">
                  <div className="relative h-4 shrink-0">
                    <HorizontalRuler />
                    <span className="absolute top-[2px] left-2 h-3 border border-[#ddd] bg-white/75 px-[2px] font-['DejaVu_Sans',sans-serif] text-[8px] leading-[11px] text-[#999]">4.781 , 8.235</span>
                  </div>
                  <div className="relative min-h-0 flex-1 overflow-hidden bg-[#c5c5c5]">
                    <Mat />
                    <PageSetup />
                  </div>
                </div>
                <VerticalRuler />
              </div>
            </div>
            <div className="flex w-[13px] shrink-0 flex-col border-r border-[#666] bg-[#abadaf]">
              <div className="h-[254px]" />
              <div className="h-[107px] bg-[#5b5d5c]" />
              <div className="mt-auto flex h-[26px] flex-col items-center justify-around bg-[#5b5d5c]">
                <Btn label="Scroll up"><Tri d="M4.500 0L9 9H0z" /></Btn>
                <Btn label="Scroll down"><Tri d="M4.500 9L9 0H0z" /></Btn>
              </div>
            </div>
          </div>
          <div className="flex h-[13px] shrink-0 border-b border-[#666] bg-[#abadaf] pr-[14px]">
            <div className="w-[447px]" />
            <div className="w-[351px] bg-[#5b5d5c]" />
            <div className="ml-auto flex w-[26px] items-center justify-around bg-[#5b5d5c]">
              <Btn label="Scroll left"><Tri d="M0 4.500L9 0v9z" /></Btn>
              <Btn label="Scroll right"><Tri d="M9 4.500L0 0v9z" /></Btn>
            </div>
          </div>
        </main>
        <RightTools />
      </div>
    </div>
  );
}
